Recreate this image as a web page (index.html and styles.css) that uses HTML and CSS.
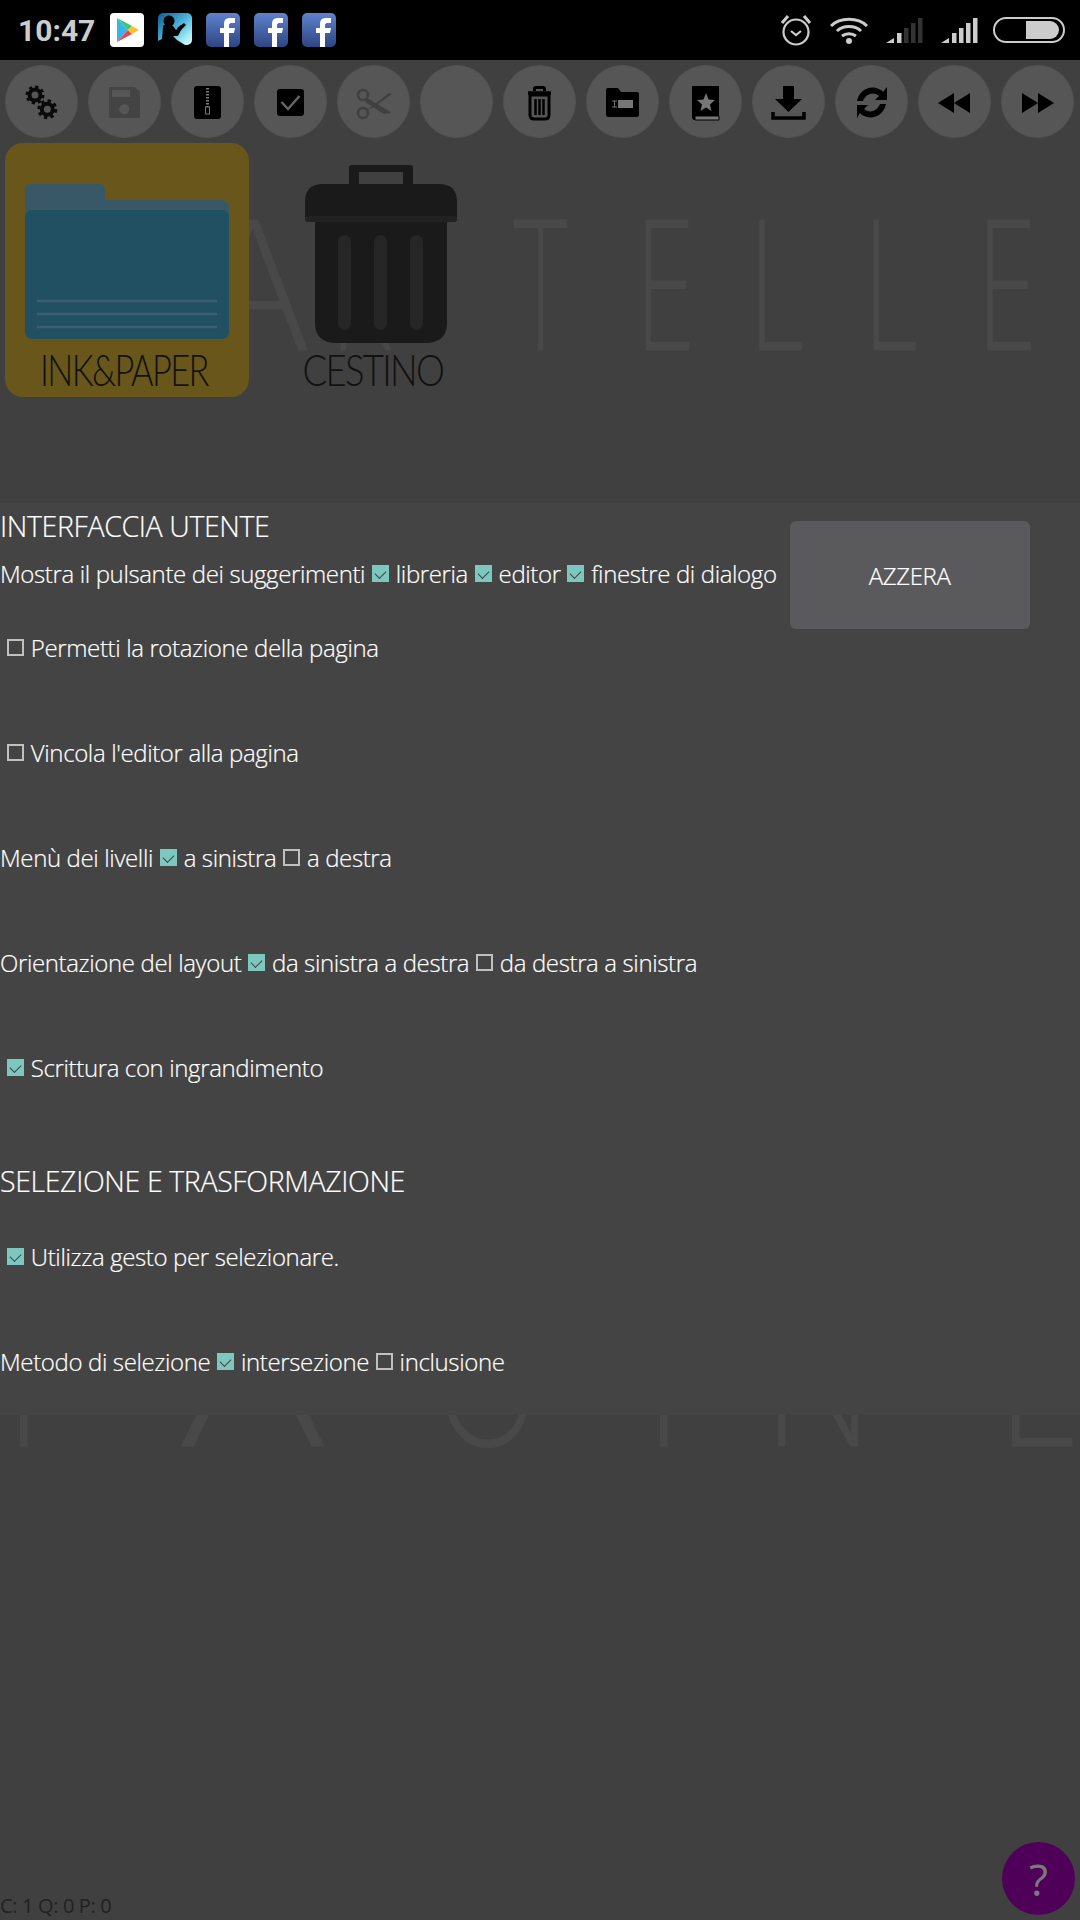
FILE: index.html
```html
<!DOCTYPE html>
<html lang="it">
<head>
<meta charset="utf-8">
<title>Impostazioni</title>
<link rel="stylesheet" href="styles.css">
</head>
<body>
<svg class="watermark" viewBox="0 0 1080 1920" aria-hidden="true">
  <g transform="scale(0.58 1)"><text class="wm-text" y="350" x="103">C</text></g>
  <g transform="scale(1.02 1)"><text class="wm-text wm-mid" y="350" x="248">A</text></g>
  <g transform="scale(0.58 1)"><text class="wm-text" y="350" x="569 876 1095 1291 1488 1684">RTELLE</text></g>
  <g transform="scale(0.8 1)"><text class="wm-text" y="1446" x="7">P</text></g>
  <g transform="scale(1.33 1)"><text class="wm-text wm-mid" y="1446" x="190">A</text></g>
  <g transform="scale(0.8 1)"><text class="wm-text" y="1446" x="542 807 954 1247">GINE</text></g>
</svg>

<header class="status">
  <span class="time">10:47</span>
  <div class="notif">
    <svg class="notif-icon" viewBox="0 0 34 34"><rect width="34" height="34" rx="4" fill="#fff"/><path d="M7 5 L18 17 L7 29Z" fill="#35b6e8"/><path d="M7 5 L22 13 L18 17Z" fill="#3fc46b"/><path d="M7 29 L22 21 L18 17Z" fill="#ea4450"/><path d="M22 13 L29 17 L22 21 L18 17Z" fill="#fbc02d"/></svg>
    <svg class="notif-icon" viewBox="0 0 34 34"><defs><linearGradient id="kg" x1="0" y1="0" x2="1" y2="1"><stop offset="0" stop-color="#0d5a8e"/><stop offset=".5" stop-color="#4db5dc"/><stop offset=".8" stop-color="#a5ecf5"/><stop offset="1" stop-color="#dffcfd"/></linearGradient></defs><rect width="34" height="32" rx="5" fill="url(#kg)"/><circle cx="11" cy="8" r="5.500" fill="#000"/><path d="M5 14C5 11 8 11 11 12L15 13 18 17 23 12 25 13 20 23 15 23 19 27 27 32H0V28L4 26Z" fill="#000"/><path d="M19 15L26 10 28 12 22 18Z" fill="#000"/></svg>
    <svg class="notif-icon" viewBox="0 0 34 34"><use href="#fb"/></svg>
    <svg class="notif-icon" viewBox="0 0 34 34"><use href="#fb"/></svg>
    <svg class="notif-icon" viewBox="0 0 34 34"><defs><linearGradient id="fg" x1="0" y1="0" x2="0" y2="1"><stop offset="0" stop-color="#5f82cb"/><stop offset="1" stop-color="#2d4585"/></linearGradient><g id="fb"><rect width="34" height="34" rx="5" fill="url(#fg)"/><path d="M18 34V20H14V15H18V11C18 7 20 5 24 5H29V10H25C24 10 23 11 23 12V15H29L28 20H23V34Z" fill="#fff"/></g></defs><use href="#fb"/></svg>
  </div>
  <div class="sys">
    <svg class="sys-alarm" viewBox="0 0 32 32"><circle cx="16" cy="18" r="12.5" fill="none" stroke="#ccc" stroke-width="2.2"/><path d="M11 17l5 4 5-4" fill="none" stroke="#ccc" stroke-width="2.2"/><path d="M2 9L8 2M30 9L24 2" stroke="#ccc" stroke-width="3"/></svg>
    <svg class="sys-wifi" viewBox="0 0 38 28"><g fill="none" stroke="#ccc" stroke-width="3"><path d="M1 10C10 1 28 1 37 10"/><path d="M7 15C13 9 25 9 31 15"/><path d="M12 20C16 17 22 17 26 20"/></g><circle cx="19" cy="25" r="3" fill="#ccc"/></svg>
    <svg class="sys-signal" viewBox="0 0 37 25"><path d="M0 25L8 20V25Z" fill="#ccc"/><rect x="11" y="15" width="4.5" height="10" fill="#ccc"/><rect x="18" y="10" width="4.5" height="15" fill="#333"/><rect x="25" y="5" width="4.5" height="20" fill="#333"/><rect x="32" y="0" width="4.5" height="25" fill="#333"/></svg>
    <svg class="sys-signal" viewBox="0 0 37 25"><path d="M0 25L8 20V25Z" fill="#ccc"/><rect x="11" y="15" width="4.5" height="10" fill="#ccc"/><rect x="18" y="10" width="4.5" height="15" fill="#ccc"/><rect x="25" y="5" width="4.5" height="20" fill="#ccc"/><rect x="32" y="0" width="4.5" height="25" fill="#ccc"/></svg>
    <svg class="sys-battery" viewBox="0 0 72 26"><rect x="1" y="1" width="70" height="24" rx="12" fill="none" stroke="#ccc" stroke-width="2"/><path d="M33 4H57A9 9 0 0 1 57 22H33Z" fill="#ccc"/></svg>
  </div>
</header>

<nav class="toolbar">
  <button class="tool"><svg viewBox="0 0 73 72"><g fill="none" stroke="#0a0a0a"><circle cx="30" cy="29" r="5.500" stroke-width="4"/><circle cx="30" cy="29" r="8" stroke-width="3" stroke-dasharray="3.140 3.140"/><circle cx="42.300" cy="43.300" r="5.500" stroke-width="4"/><circle cx="42.300" cy="43.300" r="8.500" stroke-width="3" stroke-dasharray="3.340 3.340"/></g></svg></button>
  <button class="tool"><svg viewBox="0 0 73 72"><path d="M21 21H47L52 26V52H21Z" fill="#444"/><rect x="24" y="24" width="18" height="7" fill="#565656"/><circle cx="36.300" cy="43.300" r="5" fill="#565656"/></svg></button>
  <button class="tool"><svg viewBox="0 0 73 72"><rect x="23" y="20" width="27" height="33" rx="3" fill="#000"/><path d="M36.500 22V41" stroke="#777" stroke-width="3" stroke-dasharray="1.500 1.500"/><rect x="34.500" y="41" width="4" height="7" fill="none" stroke="#777"/></svg></button>
  <button class="tool"><svg viewBox="0 0 73 72"><rect x="23" y="23" width="27" height="27" rx="3" fill="#000"/><path d="M27.500 36L34 43 45.500 30" fill="none" stroke="#666" stroke-width="2.500"/></svg></button>
  <button class="tool"><svg viewBox="0 0 73 72"><g fill="none" stroke="#404040" stroke-width="2.500"><circle cx="26" cy="29" r="5"/><circle cx="26" cy="47" r="5"/></g><path d="M30 32L52 45 54 47 47 48 28 36ZM30 44L52 27 55 28 37 41Z" fill="#404040"/></svg></button>
  <button class="tool"></button>
  <button class="tool"><svg viewBox="0 0 73 72"><path d="M27 29H46V49Q46 53 42 53H31Q27 53 27 49Z" fill="none" stroke="#000" stroke-width="3"/><path d="M25 27H48" stroke="#000" stroke-width="3.500"/><path d="M31.500 25V23Q31.500 21.500 33 21.500H40Q41.500 21.500 41.500 23V25" fill="none" stroke="#000" stroke-width="3"/><path d="M32.500 33V49M36.500 33V49M40.500 33V49" stroke="#000" stroke-width="2.500"/></svg></button>
  <button class="tool"><svg viewBox="0 0 73 72"><path d="M20 24Q20 22 22 22H32L35 26H51Q53 26 53 28V49Q53 51 51 51H22Q20 51 20 49Z" fill="#000"/><rect x="32" y="34" width="15" height="8" fill="#777"/><path d="M26 35H31M28.500 35V41M26 41H31" stroke="#777" stroke-width="1"/></svg></button>
  <button class="tool"><svg viewBox="0 0 73 72"><path d="M23 20H50V50H26V53H50V54H26Q23 54 23 51Z" fill="#000"/><path d="M26 50H50V54H26Z" fill="#777" stroke="#000"/><path d="M37 27L39.500 33.500 46 34 41 38.500 42.500 45 37 41.500 31.500 45 33 38.500 28 34 34.500 33.500Z" fill="#777"/></svg></button>
  <button class="tool"><svg viewBox="0 0 73 72"><path d="M31 20H42V33H50L36.500 46 23 33H31Z" fill="#000"/><path d="M21 46V52H52V46" fill="none" stroke="#000" stroke-width="3.500"/></svg></button>
  <button class="tool"><svg viewBox="0 0 73 72"><path d="M22 35C24 25 33 20 41 22 44 23 47 24 48 26L52 21V34H40L44 30C38 25 31 28 28 35ZM51 38C49 48 40 53 32 51 29 50 26 49 25 47L22 52V39H33L29 43C35 48 42 45 45 38Z" fill="#000"/></svg></button>
  <button class="tool"><svg viewBox="0 0 73 72"><path d="M36 27V47L20 37ZM52 27V47L36 37Z" fill="#000"/></svg></button>
  <button class="tool"><svg viewBox="0 0 73 72"><path d="M21 27V47L37 37ZM37 27V47L53 37Z" fill="#000"/></svg></button>
</nav>

<section class="files">
  <article class="file file-selected">
    <svg class="folder" viewBox="0 0 204 155"><path d="M0 6Q0 0 6 0H74Q80 0 80 6V16H196Q204 16 204 24V40H0Z" fill="#385868"/><rect y="26" width="204" height="129" rx="7" fill="#215063"/><path d="M12 117H192M12 130H192M12 143H192" stroke="#3b5f70" stroke-width="2.500"/></svg>
    <span class="file-name">INK&amp;PAPER</span>
  </article>
  <article class="file file-trash">
    <svg class="trash" viewBox="0 0 152 178"><path d="M44 22V3Q44 0 47 0H105Q108 0 108 3V22H98V7H54V22Z" fill="#1a1a1a"/><path d="M10 57H142V158Q142 178 120 178H32Q10 178 10 158Z" fill="#1a1a1a"/><path d="M0 52V37Q0 19 18 19H134Q152 19 152 37V52Q152 57 148 57H4Q0 57 0 52Z" fill="#1a1a1a"/><rect y="51" width="152" height="6" rx="3" fill="#222"/><g fill="#262626"><rect x="33" y="70" width="13" height="95" rx="6.500"/><rect x="69" y="70" width="13" height="95" rx="6.500"/><rect x="105" y="70" width="13" height="95" rx="6.500"/></g></svg>
    <span class="file-name">CESTINO</span>
  </article>
</section>

<section class="panel">
  <div class="intro">
    <div class="intro-text">
      <h2 class="heading">INTERFACCIA UTENTE</h2>
      <div class="row">
        <span>Mostra il pulsante dei suggerimenti</span>
        <i class="box on"></i><span>libreria</span>
        <i class="box on"></i><span>editor</span>
        <i class="box on"></i><span>finestre di dialogo</span>
      </div>
    </div>
    <button class="reset">AZZERA</button>
  </div>
  <div class="row spaced indent"><i class="box"></i><span>Permetti la rotazione della pagina</span></div>
  <div class="row spaced indent"><i class="box"></i><span>Vincola l'editor alla pagina</span></div>
  <div class="row spaced"><span>Menù dei livelli</span><i class="box on"></i><span>a sinistra</span><i class="box"></i><span>a destra</span></div>
  <div class="row spaced"><span>Orientazione del layout</span><i class="box on"></i><span>da sinistra a destra</span><i class="box"></i><span>da destra a sinistra</span></div>
  <div class="row spaced indent"><i class="box on"></i><span>Scrittura con ingrandimento</span></div>
  <h2 class="heading heading-second">SELEZIONE E TRASFORMAZIONE</h2>
  <div class="row spaced indent"><i class="box on"></i><span>Utilizza gesto per selezionare.</span></div>
  <div class="row spaced last"><span>Metodo di selezione</span><i class="box on"></i><span>intersezione</span><i class="box"></i><span>inclusione</span></div>
</section>

<footer class="counter">C: 1 Q: 0 P: 0</footer>
<button class="help">?</button>
</body>
</html>
```
FILE: styles.css
```css
* { box-sizing: border-box; }
html, body { margin: 0; padding: 0; }
body {
  position: relative;
  width: 1080px;
  height: 1920px;
  overflow: hidden;
  display: flex;
  flex-direction: column;
  background: #404040;
  font-family: "Open Sans", "Liberation Sans", sans-serif;
  font-weight: 300;
  color: #fff;
}
.watermark { position: absolute; left: 0; top: 0; width: 1080px; height: 1920px; }
.wm-text {
  font-family: "Inter", "Liberation Sans", sans-serif;
  font-size: 179px;
  font-weight: 200;
  fill: #494949;
  stroke: #494949;
  stroke-width: 1px;
}
.wm-mid { text-anchor: middle; }
.status {
  position: relative;
  height: 60px;
  flex: none;
  display: flex;
  align-items: center;
  background: #000;
  padding-left: 18px;
}
.time { font-family: "Roboto", sans-serif; font-weight: 700; font-size: 30px; color: #ccc; width: 92px; }
.notif { display: flex; gap: 14px; margin-top: 0; }
.notif-icon { width: 34px; height: 34px; display: block; }
.sys { margin-left: auto; padding-right: 15px; display: flex; align-items: center; }
.sys-alarm { width: 32px; height: 32px; margin-right: 18px; }
.sys-wifi { width: 38px; height: 28px; margin-right: 18px; }
.sys-signal { width: 37px; height: 25px; margin-right: 18px; }
.sys-battery { width: 72px; height: 26px; margin-left: -3px; }
.toolbar {
  position: relative;
  flex: none;
  height: 83px;
  padding: 5px 0 0 5px;
  display: flex;
  gap: 10px;
}
.tool {
  width: 73px;
  height: 73px;
  padding: 0;
  border: 1px solid #525252;
  border-radius: 50%;
  background: #565656;
  flex: none;
}
.tool svg { display: block; width: 73px; height: 72px; margin: -1px; }
.files {
  position: relative;
  flex: none;
  height: 360px;
  display: flex;
  padding-left: 5px;
}
.file {
  position: relative;
  width: 244px;
  height: 254px;
  display: flex;
  flex-direction: column;
  align-items: center;
}
.file-selected { background: #68561a; border-radius: 18px; padding-top: 41px; }
.file-trash { margin-left: 56px; width: 152px; padding-top: 22px; }
.folder { width: 204px; height: 155px; display: block; }
.trash { width: 152px; height: 178px; display: block; flex: none; }
.file-name {
  font-family: "Lato", "Liberation Sans", sans-serif;
  font-weight: 300;
  font-size: 43px;
  line-height: 46px;
  letter-spacing: -2px;
  color: #111;
  white-space: nowrap;
  margin-top: 8px;
  transform: translateX(-3px) scaleX(0.8);
}
.file-trash .file-name { margin-top: 4px; transform: translateX(-8px) scaleX(0.85); }
.panel { position: relative; flex: none; height: 912px; background: #444; -webkit-text-stroke: 0.2px #fff; }
.intro { display: flex; gap: 13px; height: 127px; }
.heading { margin: 0; font-weight: 300; font-size: 28.500px; letter-spacing: -0.380px; line-height: 46px; height: 46px; white-space: nowrap; }
.heading-second { margin-top: 0; height: 52px; line-height: 52px; margin-bottom: 32px; }
.row { display: flex; align-items: center; gap: 6.800px; height: 35px; font-size: 24px; letter-spacing: -0.370px; line-height: 35px; white-space: nowrap; }
.intro-text .row { margin-top: 7px; }
.spaced { margin-bottom: 70px; }
.last { margin-bottom: 0; }
.indent { padding-left: 7px; }
.box { display: block; width: 17px; height: 17px; flex: none; border: 2px solid #c0c0c0; }
.box.on {
  border: 0;
  background: #7cc8bf;
  position: relative;
}
.box.on::after {
  content: "";
  position: absolute;
  left: 5px;
  top: 3px;
  width: 6px;
  height: 9px;
  border-right: 1.500px solid #444;
  border-bottom: 1.500px solid #444;
  transform: rotate(45deg);
}
.reset {
  width: 240px;
  height: 108px;
  margin-top: 18px;
  border: 0;
  border-radius: 6px;
  background: #5a5a5c;
  color: #fff;
  font: 300 24px "Open Sans", sans-serif;
  letter-spacing: -0.350px;
  -webkit-text-stroke: 0.2px #fff;
}
.counter { position: relative; margin-top: auto; font-size: 20px; letter-spacing: -0.350px; line-height: 28px; height: 28px; color: #222; font-weight: 400; margin-bottom: 0; }
.help {
  position: absolute;
  left: 1002px;
  top: 1842px;
  width: 73px;
  height: 73px;
  border: 0;
  border-radius: 50%;
  background: #4f0059;
  color: #7a7a7a;
  font: 400 44px "Open Sans", sans-serif;
  padding: 0;
}
```
